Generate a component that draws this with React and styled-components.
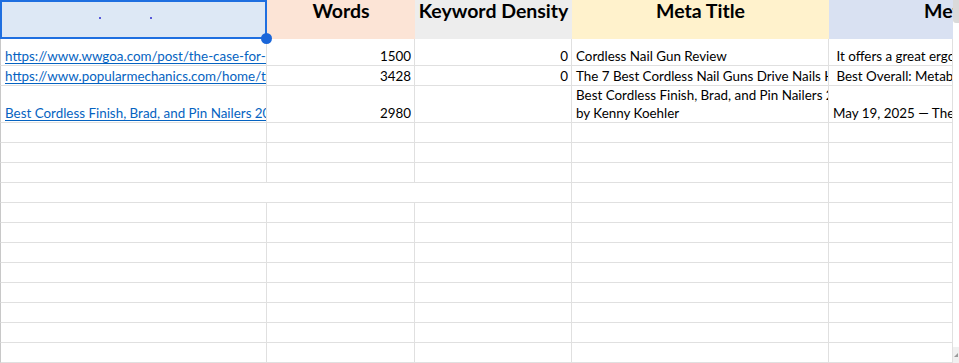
import React from "react";
import styled, { createGlobalStyle } from "styled-components";

const GlobalStyle = createGlobalStyle`
  html, body {
    margin: 0;
    padding: 0;
    background: #ffffff;
  }
  body {
    font-family: Lato, "Open Sans", sans-serif;
    overflow: hidden;
  }
`;

const Page = styled.div`
  display: flex;
  width: 959px;
  height: 363px;
  overflow: hidden;
`;

const Sheet = styled.div`
  display: grid;
  grid-template-columns: 267px 148px 157px 257px 124px;
  grid-template-rows: 39px 27px 20px 37px repeat(12, 20px);
  width: 953px;
`;

const HeaderCell = styled.div`
  box-sizing: border-box;
  background: ${(p) => p.$bg};
  font-size: 19.5px;
  font-weight: 700;
  color: #000;
  text-align: ${(p) => (p.$indent ? "left" : "center")};
  padding-left: ${(p) => p.$indent || 0}px;
  line-height: 22px;
  white-space: nowrap;
  overflow: hidden;
`;

const SelectedCell = styled.div`
  position: relative;
  box-sizing: border-box;
  background: #dde8f5;
  border: 2px solid #1f6fe0;
  display: flex;
  align-items: flex-start;
  gap: 49px;
  padding: 15px 0 0 97px;
`;

const Dot = styled.span`
  width: 2px;
  height: 2px;
  border-radius: 1px;
  background: #2a2ad0;
`;

const Handle = styled.span`
  position: absolute;
  right: -7px;
  bottom: -7px;
  width: 11px;
  height: 11px;
  border-radius: 50%;
  background: #1a66d9;
  z-index: 2;
`;

const Cell = styled.div`
  box-sizing: border-box;
  border-right: 1px solid #e0e0e0;
  border-bottom: 1px solid #e0e0e0;
  ${(p) => p.$first && "border-left: 1px solid #c8c8c8;"}
  ${(p) => p.$span && `grid-column: span ${p.$span};`}
  display: flex;
  flex-direction: column;
  justify-content: flex-end;
  align-items: ${(p) => (p.$right ? "flex-end" : "flex-start")};
  padding: 0 3px 0 4px;
  overflow: hidden;
  font-size: 13.4px;
  line-height: 18px;
  color: #000;
  white-space: pre;
`;

const Link = styled.a`
  color: #0563c1;
  text-decoration: underline;
  text-underline-offset: 2px;
  white-space: nowrap;
`;

const Line = styled.span`
  display: block;
  white-space: pre;
`;

const Scrollbar = styled.div`
  display: flex;
  flex-direction: column;
  width: 6px;
  background: #ffffff;
`;

const Thumb = styled.div`
  height: 23px;
  background: #dadada;
  border-bottom-left-radius: 3px;
`;

const Track = styled.div`
  flex: 1;
`;

const Corner = styled.div`
  height: 16px;
  background: #f0f0f0;
  display: flex;
  align-items: center;
  justify-content: center;
`;

const headers = [
  { label: "Words", bg: "#fce4d6" },
  { label: "Keyword Density", bg: "#ededed" },
  { label: "Meta Title", bg: "#fff2cc" },
  { label: "Meta Description", bg: "#d9e1f2", indent: 95 },
];

const rows = [
  {
    url: "https://www.wwgoa.com/post/the-case-for-cordless-nail-guns",
    words: "1500",
    density: "0",
    title: ["Cordless Nail Gun Review"],
    desc: " It offers a great ergonomic design",
  },
  {
    url: "https://www.popularmechanics.com/home/tools/g7/best-cordless-nail-guns",
    words: "3428",
    density: "0",
    title: ["The 7 Best Cordless Nail Guns Drive Nails Hassle-Free"],
    desc: " Best Overall: Metabo HPT",
  },
  {
    url: "Best Cordless Finish, Brad, and Pin Nailers 2025",
    words: "2980",
    density: "",
    title: ["Best Cordless Finish, Brad, and Pin Nailers 2025", "by Kenny Koehler"],
    desc: "May 19, 2025 \u2014 The best cordless nailers",
  },
];

const emptyRows = Array.from({ length: 12 }, (_, i) => i);

export default function App() {
  return (
    <>
      <GlobalStyle />
      <Page>
        <Sheet>
          <SelectedCell>
            <Dot />
            <Dot />
            <Handle />
          </SelectedCell>
          {headers.map((h) => (
            <HeaderCell key={h.label} $bg={h.bg} $indent={h.indent}>
              {h.label}
            </HeaderCell>
          ))}

          {rows.map((r) => (
            <React.Fragment key={r.words}>
              <Cell $first>
                <Link href="#">{r.url}</Link>
              </Cell>
              <Cell $right>{r.words}</Cell>
              <Cell $right>{r.density}</Cell>
              <Cell>
                {r.title.map((t) => (
                  <Line key={t}>{t}</Line>
                ))}
              </Cell>
              <Cell>{r.desc}</Cell>
            </React.Fragment>
          ))}

          {emptyRows.map((i) =>
            i === 3 ? (
              <React.Fragment key={i}>
                <Cell $first $span={3} />
                <Cell />
                <Cell />
              </React.Fragment>
            ) : (
              <React.Fragment key={i}>
                <Cell $first />
                <Cell />
                <Cell />
                <Cell />
                <Cell />
              </React.Fragment>
            )
          )}
        </Sheet>
        <Scrollbar>
          <Thumb />
          <Track />
          <Corner>
            <svg width="4" height="4" viewBox="0 0 4 4">
              <path d="M4 0 L4 4 L0 4 Z" fill="#9a9a9a" />
            </svg>
          </Corner>
        </Scrollbar>
      </Page>
    </>
  );
}
